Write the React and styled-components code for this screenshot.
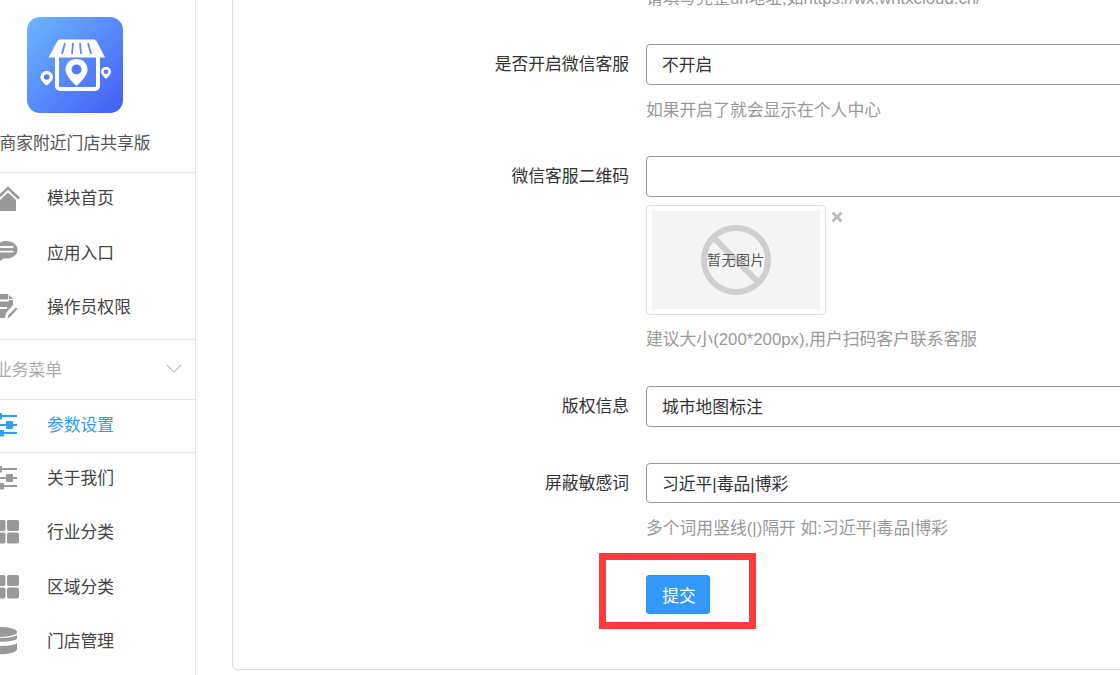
import React from 'react';
import styled, { createGlobalStyle } from 'styled-components';

const GlobalStyle = createGlobalStyle`
  html, body {
    margin: 0;
    padding: 0;
    background: #fff;
    overflow: hidden;
  }
  * {
    box-sizing: border-box;
  }
`;

const Page = styled.div`
  display: flex;
  width: 1120px;
  height: 675px;
  overflow: hidden;
  font-family: "Liberation Sans", "Noto Sans CJK SC", sans-serif;
  font-size: 16.8px;
  color: #333;
`;

const Sidebar = styled.aside`
  flex: none;
  width: 241px;
  margin-left: -45px;
  border-right: 1px solid #e6e6e6;
`;

const Brand = styled.div`
  display: flex;
  flex-direction: column;
  align-items: center;
  height: 173px;
  padding-top: 17px;
  border-bottom: 1px solid #e6e6e6;
`;

const LogoTile = styled.svg`
  display: block;
  width: 96px;
  height: 96px;
`;

const BrandName = styled.div`
  margin-top: 19px;
  line-height: 24px;
  color: #555;
  white-space: nowrap;
`;

const MenuItem = styled.div`
  display: flex;
  align-items: center;
  height: ${(p) => (p.$active ? '51.4px' : '54.4px')};
  padding: 0 0 ${(p) => (p.$active ? '4px' : '6px')} 40px;
  color: ${(p) => (p.$active ? '#3399ff' : '#444')};
`;

const MenuIcon = styled.span`
  display: flex;
  flex: none;
  width: 26px;
  margin-right: 26px;
  padding-top: 2px;
  color: ${(p) => (p.$active ? '#3399ff' : '#999')};
`;

const SectionHead = styled.div`
  display: flex;
  align-items: center;
  justify-content: space-between;
  height: 61px;
  margin-top: 3px;
  padding: 0 13px 2px 40px;
  border: 1px solid #e6e6e6;
  border-left: 0;
  border-right: 0;
  color: #aaa;
`;

const Chevron = styled.svg`
  width: 16px;
  height: 9px;
  fill: none;
  stroke: #bbb;
  stroke-width: 1.3;
`;

const ActiveGroup = styled.div`
  border-bottom: 1px solid #e6e6e6;
`;

const Main = styled.main`
  flex: 1;
  display: flex;
  flex-direction: column;
  justify-content: flex-end;
  min-width: 0;
  height: 675px;
  padding: 0 0 5px 36px;
  overflow: hidden;
`;

const Panel = styled.section`
  flex: none;
  width: 1100px;
  padding-bottom: 55px;
  border: 1px solid #ddd;
  border-radius: 5px;
`;

const Field = styled.div`
  display: grid;
  grid-template-columns: 413px 1fr;
  margin-bottom: ${(p) => p.$gap || 33.6}px;
`;

const Label = styled.label`
  height: 40.8px;
  padding-right: 17px;
  line-height: 41px;
  text-align: right;
  color: #333;
`;

const Control = styled.div`
  grid-column: 2;
  min-width: 0;
`;

const TextInput = styled.input`
  display: block;
  width: 100%;
  height: 40.8px;
  padding: 0 15px 1px;
  border: 1px solid #999;
  border-radius: 4px;
  outline: none;
  background: #fff;
  font: inherit;
  color: #333;
`;

const Hint = styled.div`
  margin-top: ${(p) => p.$top || 14}px;
  line-height: 24px;
  color: #999;
  white-space: nowrap;
`;

const ImageRow = styled.div`
  display: flex;
  align-items: flex-start;
  margin-top: 8.4px;
`;

const ImageFrame = styled.div`
  width: 180px;
  height: 110px;
  padding: 5px;
  border: 1px solid #ddd;
  border-radius: 4px;
`;

const NoImage = styled.div`
  position: relative;
  display: flex;
  align-items: center;
  justify-content: center;
  height: 100%;
  background: #f5f5f5;
`;

const NoImageMark = styled.svg`
  position: absolute;
  top: 14px;
  left: 49px;
  width: 70px;
  height: 70px;
  fill: none;
  stroke: #cfcfcf;
  stroke-width: 6;
`;

const NoImageText = styled.span`
  position: relative;
  padding-bottom: 2px;
  font-size: 14px;
  letter-spacing: 0.5px;
  color: #555;
`;

const RemoveMark = styled.svg`
  flex: none;
  width: 12px;
  height: 12px;
  margin: 6px 0 0 5px;
  stroke: #bbb;
  stroke-width: 3;
`;

const ButtonWrap = styled.div`
  position: relative;
  width: 64px;
  margin-left: 413px;
`;

const SubmitButton = styled.button`
  display: block;
  width: 64px;
  height: 39px;
  padding: 0 0 0 2px;
  border: 1px solid #2b8ff0;
  border-radius: 3px;
  background: #3399ff;
  font: inherit;
  color: #fff;
`;

const Highlight = styled.div`
  position: absolute;
  top: -22px;
  left: -47px;
  width: 157px;
  height: 76px;
  border: 7px solid #ff3b3b;
  pointer-events: none;
`;

function HomeIcon() {
  return (
    <svg width="26" height="26" viewBox="0 0 26 26" fill="currentColor">
      <path d="M2 13.500L13 3l11 10.500" fill="none" stroke="currentColor" strokeWidth="2.600" />
      <path d="M13 7.500l8 7.500v11H5V15z" />
    </svg>
  );
}

function ChatIcon() {
  return (
    <svg width="23" height="23" viewBox="0 0 25 25" fill="currentColor">
      <path d="M12.500 0C19 0 24.500 4 24.500 9.500S19 19 12.500 19c-1 0-2-.1-3-.3C7.500 20.500 4.500 22.500 1.500 23c1.500-1.500 2.500-3.500 2.800-6C2 15.300.5 12.600.5 9.500.5 4 6 0 12.500 0z" />
      <path d="M5 6.500h15M5 11.500h15" stroke="#fff" strokeWidth="2" />
    </svg>
  );
}

function DocIcon() {
  return (
    <svg width="23" height="25" viewBox="0 0 23 25" fill="currentColor">
      <path d="M0 0h13l5 6v5l-7 8-1 5H0z" />
      <path d="M13 0v6h5z" fill="#fff" />
      <path d="M14 1l4 4h-4z" />
      <path d="M0 6.500h14M0 14h12" stroke="#fff" strokeWidth="2.200" />
      <path d="M12.500 24.500l1-3.500 7.500-7.500 1.500 1.500-7.500 8z" />
    </svg>
  );
}

function SlidersIcon() {
  return (
    <svg width="22" height="26" viewBox="0 0 22 26" fill="currentColor">
      <rect x="0" y="3" width="22" height="2" />
      <rect x="0" y="12" width="22" height="2" />
      <rect x="0" y="20" width="22" height="2" />
      <rect x="0" y="1" width="7" height="6.500" rx="1" />
      <rect x="11" y="9" width="7" height="8" rx="1" />
      <rect x="0" y="18" width="9" height="6.500" rx="1" />
    </svg>
  );
}

function GridIcon() {
  return (
    <svg width="26" height="24" viewBox="0 0 26 24" fill="currentColor">
      <rect x="0" y="0" width="10.500" height="11" rx="2" />
      <rect x="12" y="0" width="12" height="11" rx="2" />
      <rect x="0" y="12.500" width="10.500" height="11" rx="2" />
      <rect x="12" y="12.500" width="12" height="11" rx="2" />
    </svg>
  );
}

function StackIcon() {
  return (
    <svg width="22" height="28" viewBox="0 0 22 28" fill="currentColor">
      <ellipse cx="5" cy="5" rx="17" ry="5" />
      <path d="M-12 7.500C-12 12 22 12 22 7.500V11C22 16-12 16-12 11z" />
      <path d="M-12 15.500C-12 20 22 20 22 15.500V22C22 29-12 29-12 22z" />
    </svg>
  );
}

function Logo() {
  return (
    <LogoTile viewBox="0 0 96 96">
      <defs>
        <linearGradient id="tile" x1="0" y1="0" x2="1" y2="1">
          <stop offset="0" stopColor="#6cb6ff" />
          <stop offset="1" stopColor="#425ef5" />
        </linearGradient>
      </defs>
      <rect width="96" height="96" rx="13" fill="url(#tile)" />
      <path d="M33 22.500h34a3 3 0 0 1 2.500 1.500L78 40.500H21.500L30.500 24a3 3 0 0 1 2.500-1.500z" fill="#fff" />
      <path d="M38 26l-3 11M46 26l-1 11M53 26l1 11M61 26l3 11" stroke="#5b8df8" strokeWidth="1.800" />
      <path d="M30 40v29a3 3 0 0 0 3 3h35a3 3 0 0 0 3-3V40" fill="none" stroke="#fff" strokeWidth="4" />
      <path d="M49.500 42c6.500 0 11 4.800 11 10.500 0 5.500-6 12-11 16.500-5-4.500-11-11-11-16.500C38.500 46.800 43 42 49.500 42z" fill="#fff" />
      <circle cx="49.500" cy="52.500" r="5" fill="#5279f8" />
      <path d="M19.700 54c3.500 0 6.300 2.700 6.300 6 0 3-3.500 6.300-6.300 8.500-2.800-2.200-6.300-5.500-6.300-8.500 0-3.300 2.800-6 6.300-6z" fill="#fff" />
      <circle cx="19.700" cy="60" r="2.800" fill="#5279f8" />
      <path d="M79 50c2.800 0 5 2 5 4.800 0 2.400-2.700 5-5 7-2.300-2-5-4.600-5-7C74 52 76.200 50 79 50z" fill="#fff" />
      <circle cx="79" cy="54.800" r="2.300" fill="#5279f8" />
    </LogoTile>
  );
}

const topItems = [
  { text: '模块首页', icon: <HomeIcon /> },
  { text: '应用入口', icon: <ChatIcon /> },
  { text: '操作员权限', icon: <DocIcon /> },
];

const bottomItems = [
  { text: '关于我们', icon: <SlidersIcon /> },
  { text: '行业分类', icon: <GridIcon /> },
  { text: '区域分类', icon: <GridIcon /> },
  { text: '门店管理', icon: <StackIcon /> },
];

function NavItem({ item, active }) {
  return (
    <MenuItem $active={active}>
      <MenuIcon $active={active}>{item.icon}</MenuIcon>
      {item.text}
    </MenuItem>
  );
}

export default function App() {
  return (
    <Page>
      <GlobalStyle />
      <Sidebar>
        <Brand>
          <Logo />
          <BrandName>商家附近门店共享版</BrandName>
        </Brand>
        {topItems.map((item) => (
          <NavItem key={item.text} item={item} />
        ))}
        <SectionHead>
          业务菜单
          <Chevron viewBox="0 0 18 10">
            <path d="M1 1l8 8 8-8" />
          </Chevron>
        </SectionHead>
        <ActiveGroup>
          <NavItem item={{ text: '参数设置', icon: <SlidersIcon /> }} active />
        </ActiveGroup>
        {bottomItems.map((item) => (
          <NavItem key={item.text} item={item} />
        ))}
      </Sidebar>

      <Main>
        <Panel>
          <Field>
            <Control>
              <Hint>请填写完整url地址,如https://wx.whtxcloud.cn/</Hint>
            </Control>
          </Field>

          <Field $gap={33}>
            <Label>是否开启微信客服</Label>
            <Control>
              <TextInput readOnly value="不开启" />
              <Hint>如果开启了就会显示在个人中心</Hint>
            </Control>
          </Field>

          <Field>
            <Label>微信客服二维码</Label>
            <Control>
              <TextInput readOnly value="" />
              <ImageRow>
                <ImageFrame>
                  <NoImage>
                    <NoImageMark viewBox="0 0 70 70">
                      <circle cx="35" cy="35" r="32" />
                      <path d="M12 12l46 46" />
                    </NoImageMark>
                    <NoImageText>暂无图片</NoImageText>
                  </NoImage>
                </ImageFrame>
                <RemoveMark viewBox="0 0 12 12">
                  <path d="M1.500 1.500l9 9M10.500 1.500l-9 9" />
                </RemoveMark>
              </ImageRow>
              <Hint $top={13}>建议大小(200*200px),用户扫码客户联系客服</Hint>
            </Control>
          </Field>

          <Field $gap={36}>
            <Label>版权信息</Label>
            <Control>
              <TextInput readOnly value="城市地图标注" />
            </Control>
          </Field>

          <Field>
            <Label>屏蔽敏感词</Label>
            <Control>
              <TextInput readOnly value="习近平|毒品|博彩" />
              <Hint>多个词用竖线(|)隔开 如:习近平|毒品|博彩</Hint>
            </Control>
          </Field>

          <ButtonWrap>
            <SubmitButton type="button">提交</SubmitButton>
            <Highlight />
          </ButtonWrap>
        </Panel>
      </Main>
    </Page>
  );
}
